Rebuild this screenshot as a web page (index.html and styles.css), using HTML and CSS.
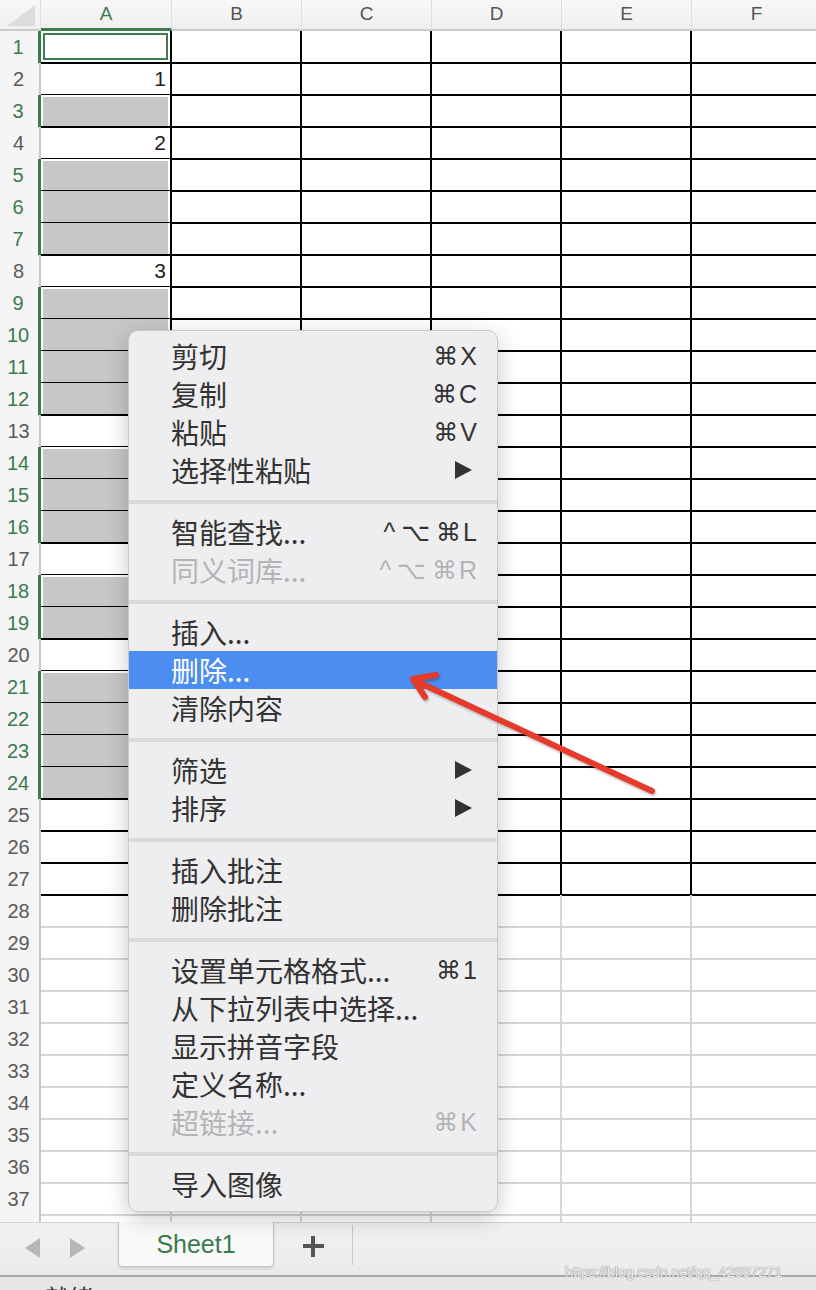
FILE: index.html
```html
<!DOCTYPE html>
<html lang="zh-CN">
<head>
    <meta charset="UTF-8">
    <meta name="viewport" content="width=device-width, initial-scale=1.0">
    <title>Sheet1</title>
    <link rel="stylesheet" href="styles.css">
</head>
<body>
<div class="window">
    <div class="sheet">
        <div class="colhead">
            <div class="corner">
                <svg width="41" height="29" viewBox="0 0 41 29"><polygon points="7,26 35,26 35,5" fill="#dcdcdc"/></svg>
            </div>
            <div class="ch cur">A</div>
            <div class="ch">B</div>
            <div class="ch">C</div>
            <div class="ch">D</div>
            <div class="ch">E</div>
            <div class="ch">F</div>
        </div>

        <div class="row bk"><div class="rh on">1</div><div class="c a active"></div><div class="c"></div><div class="c"></div><div class="c"></div><div class="c"></div><div class="c"></div></div>
        <div class="row bk"><div class="rh">2</div><div class="c a num">1</div><div class="c"></div><div class="c"></div><div class="c"></div><div class="c"></div><div class="c"></div></div>
        <div class="row bk"><div class="rh on">3</div><div class="c a g t"></div><div class="c"></div><div class="c"></div><div class="c"></div><div class="c"></div><div class="c"></div></div>
        <div class="row bk"><div class="rh">4</div><div class="c a num">2</div><div class="c"></div><div class="c"></div><div class="c"></div><div class="c"></div><div class="c"></div></div>
        <div class="row bk"><div class="rh on">5</div><div class="c a g t"></div><div class="c"></div><div class="c"></div><div class="c"></div><div class="c"></div><div class="c"></div></div>
        <div class="row bk"><div class="rh on">6</div><div class="c a g"></div><div class="c"></div><div class="c"></div><div class="c"></div><div class="c"></div><div class="c"></div></div>
        <div class="row bk"><div class="rh on">7</div><div class="c a g"></div><div class="c"></div><div class="c"></div><div class="c"></div><div class="c"></div><div class="c"></div></div>
        <div class="row bk"><div class="rh">8</div><div class="c a num">3</div><div class="c"></div><div class="c"></div><div class="c"></div><div class="c"></div><div class="c"></div></div>
        <div class="row bk"><div class="rh on">9</div><div class="c a g t"></div><div class="c"></div><div class="c"></div><div class="c"></div><div class="c"></div><div class="c"></div></div>
        <div class="row bk"><div class="rh on">10</div><div class="c a g"></div><div class="c"></div><div class="c"></div><div class="c"></div><div class="c"></div><div class="c"></div></div>
        <div class="row bk"><div class="rh on">11</div><div class="c a g"></div><div class="c"></div><div class="c"></div><div class="c"></div><div class="c"></div><div class="c"></div></div>
        <div class="row bk"><div class="rh on">12</div><div class="c a g"></div><div class="c"></div><div class="c"></div><div class="c"></div><div class="c"></div><div class="c"></div></div>
        <div class="row bk"><div class="rh">13</div><div class="c a"></div><div class="c"></div><div class="c"></div><div class="c"></div><div class="c"></div><div class="c"></div></div>
        <div class="row bk"><div class="rh on">14</div><div class="c a g t"></div><div class="c"></div><div class="c"></div><div class="c"></div><div class="c"></div><div class="c"></div></div>
        <div class="row bk"><div class="rh on">15</div><div class="c a g"></div><div class="c"></div><div class="c"></div><div class="c"></div><div class="c"></div><div class="c"></div></div>
        <div class="row bk"><div class="rh on">16</div><div class="c a g"></div><div class="c"></div><div class="c"></div><div class="c"></div><div class="c"></div><div class="c"></div></div>
        <div class="row bk"><div class="rh">17</div><div class="c a"></div><div class="c"></div><div class="c"></div><div class="c"></div><div class="c"></div><div class="c"></div></div>
        <div class="row bk"><div class="rh on">18</div><div class="c a g t"></div><div class="c"></div><div class="c"></div><div class="c"></div><div class="c"></div><div class="c"></div></div>
        <div class="row bk"><div class="rh on">19</div><div class="c a g"></div><div class="c"></div><div class="c"></div><div class="c"></div><div class="c"></div><div class="c"></div></div>
        <div class="row bk"><div class="rh">20</div><div class="c a"></div><div class="c"></div><div class="c"></div><div class="c"></div><div class="c"></div><div class="c"></div></div>
        <div class="row bk"><div class="rh on">21</div><div class="c a g t"></div><div class="c"></div><div class="c"></div><div class="c"></div><div class="c"></div><div class="c"></div></div>
        <div class="row bk"><div class="rh on">22</div><div class="c a g"></div><div class="c"></div><div class="c"></div><div class="c"></div><div class="c"></div><div class="c"></div></div>
        <div class="row bk"><div class="rh on">23</div><div class="c a g"></div><div class="c"></div><div class="c"></div><div class="c"></div><div class="c"></div><div class="c"></div></div>
        <div class="row bk"><div class="rh on">24</div><div class="c a g"></div><div class="c"></div><div class="c"></div><div class="c"></div><div class="c"></div><div class="c"></div></div>
        <div class="row bk"><div class="rh">25</div><div class="c a"></div><div class="c"></div><div class="c"></div><div class="c"></div><div class="c"></div><div class="c"></div></div>
        <div class="row bk"><div class="rh">26</div><div class="c a"></div><div class="c"></div><div class="c"></div><div class="c"></div><div class="c"></div><div class="c"></div></div>
        <div class="row bk"><div class="rh">27</div><div class="c a"></div><div class="c"></div><div class="c"></div><div class="c"></div><div class="c"></div><div class="c"></div></div>
        <div class="row"><div class="rh">28</div><div class="c a"></div><div class="c"></div><div class="c"></div><div class="c"></div><div class="c"></div><div class="c"></div></div>
        <div class="row"><div class="rh">29</div><div class="c a"></div><div class="c"></div><div class="c"></div><div class="c"></div><div class="c"></div><div class="c"></div></div>
        <div class="row"><div class="rh">30</div><div class="c a"></div><div class="c"></div><div class="c"></div><div class="c"></div><div class="c"></div><div class="c"></div></div>
        <div class="row"><div class="rh">31</div><div class="c a"></div><div class="c"></div><div class="c"></div><div class="c"></div><div class="c"></div><div class="c"></div></div>
        <div class="row"><div class="rh">32</div><div class="c a"></div><div class="c"></div><div class="c"></div><div class="c"></div><div class="c"></div><div class="c"></div></div>
        <div class="row"><div class="rh">33</div><div class="c a"></div><div class="c"></div><div class="c"></div><div class="c"></div><div class="c"></div><div class="c"></div></div>
        <div class="row"><div class="rh">34</div><div class="c a"></div><div class="c"></div><div class="c"></div><div class="c"></div><div class="c"></div><div class="c"></div></div>
        <div class="row"><div class="rh">35</div><div class="c a"></div><div class="c"></div><div class="c"></div><div class="c"></div><div class="c"></div><div class="c"></div></div>
        <div class="row"><div class="rh">36</div><div class="c a"></div><div class="c"></div><div class="c"></div><div class="c"></div><div class="c"></div><div class="c"></div></div>
        <div class="row"><div class="rh">37</div><div class="c a"></div><div class="c"></div><div class="c"></div><div class="c"></div><div class="c"></div><div class="c"></div></div>
        <div class="row"><div class="rh"></div><div class="c a"></div><div class="c"></div><div class="c"></div><div class="c"></div><div class="c"></div><div class="c"></div></div>
    </div>

    <div class="tabbar">
        <div class="nav">
            <span class="prev"></span>
            <span class="next"></span>
        </div>
        <div class="tab">Sheet1</div>
        <div class="add"></div>
        <div class="divider"></div>
    </div>
    <div class="status">就绪</div>
    <div class="watermark">https://blog.csdn.net/qq_42697271</div>

    <div class="menu">
        <div class="mi"><span>剪切</span><span class="key">⌘X</span></div>
        <div class="mi"><span>复制</span><span class="key">⌘C</span></div>
        <div class="mi"><span>粘贴</span><span class="key">⌘V</span></div>
        <div class="mi"><span>选择性粘贴</span><span class="more"></span></div>
        <div class="sep"></div>
        <div class="mi"><span>智能查找...</span><span class="key"><span class="mod">^⌥</span>⌘L</span></div>
        <div class="mi off"><span>同义词库...</span><span class="key"><span class="mod">^⌥</span>⌘R</span></div>
        <div class="sep"></div>
        <div class="mi"><span>插入...</span></div>
        <div class="mi hl"><span>删除...</span></div>
        <div class="mi"><span>清除内容</span></div>
        <div class="sep"></div>
        <div class="mi"><span>筛选</span><span class="more"></span></div>
        <div class="mi"><span>排序</span><span class="more"></span></div>
        <div class="sep"></div>
        <div class="mi"><span>插入批注</span></div>
        <div class="mi"><span>删除批注</span></div>
        <div class="sep"></div>
        <div class="mi"><span>设置单元格格式...</span><span class="key">⌘1</span></div>
        <div class="mi"><span>从下拉列表中选择...</span></div>
        <div class="mi"><span>显示拼音字段</span></div>
        <div class="mi"><span>定义名称...</span></div>
        <div class="mi off"><span>超链接...</span><span class="key">⌘K</span></div>
        <div class="sep"></div>
        <div class="mi"><span>导入图像</span></div>
    </div>

    <svg class="arrow" width="816" height="1290" viewBox="0 0 816 1290">
        <g fill="none" stroke="#e53a2c" stroke-width="6" stroke-linecap="round" stroke-linejoin="round">
            <line x1="652" y1="791" x2="416" y2="681"/>
            <polyline points="436,675 413,679 425,697"/>
        </g>
    </svg>
</div>
</body>
</html>
```

FILE: styles.css
```css
* {
    box-sizing: border-box;
}
body {
    margin: 0;
    background: #fff;
    font-family: "Liberation Sans", "Noto Sans CJK SC", sans-serif;
}
.window {
    position: relative;
    width: 816px;
    height: 1290px;
    overflow: hidden;
}
.sheet {
    height: 1222px;
    overflow: hidden;
}
.colhead,
.row {
    display: grid;
    grid-template-columns: 41px 131px repeat(5, 130px);
}
.colhead {
    height: 31px;
    background: linear-gradient(#f7f7f7, #efefef);
}
.corner {
    border-bottom: 2px solid #cbcbcb;
    border-right: 1px solid #dedede;
}
.corner svg {
    display: block;
}
.ch {
    border-bottom: 2px solid #cbcbcb;
    border-right: 1px solid #dedede;
    text-align: center;
    font-size: 19px;
    line-height: 27px;
    color: #555;
}
.ch.cur {
    color: #3a7b4e;
    border-bottom: 3px solid #3a7b4e;
}
.row {
    height: 32px;
}
.rh {
    background: #f5f5f5;
    border-right: 2px solid #c9c9c9;
    border-bottom: 1px solid #e3e3e3;
    text-align: center;
    font-size: 20px;
    line-height: 32px;
    color: #5a5a5a;
    padding-right: 2px;
}
.rh.on {
    color: #3a7b4e;
    border-right: 3px solid #3a7b4e;
}
.c {
    border-right: 2px solid #d6d6d8;
    border-bottom: 2px solid #d6d6d8;
}
.row.bk .c {
    border-color: #000;
}
.c.num {
    text-align: right;
    padding-right: 4px;
    font-size: 21px;
    line-height: 31px;
    color: #222;
}
.c.active {
    box-shadow: inset 0 0 0 2px #fff, inset 0 0 0 4px #3d7d52;
}
.c.g {
    background: #c7c7c9;
    box-shadow: inset 2px 0 #fff, inset -2px 0 #fff;
}
.c.g.t {
    box-shadow: inset 2px 2px #fff, inset -2px 0 #fff;
}

/* sheet tabs */
.tabbar {
    display: flex;
    align-items: flex-start;
    height: 55px;
    background: linear-gradient(#f1f1f1, #ebebeb);
    border-top: 1px solid #d2d2d2;
    border-bottom: 2px solid #a9a9a9;
}
.nav {
    width: 118px;
    display: flex;
    gap: 30px;
    padding: 15px 0 0 25px;
}
.prev,
.next {
    width: 0;
    height: 0;
    border-top: 10px solid transparent;
    border-bottom: 10px solid transparent;
}
.prev {
    border-right: 15px solid #b6b6b6;
}
.next {
    border-left: 15px solid #b6b6b6;
}
.tab {
    width: 156px;
    height: 45px;
    margin-top: -1px;
    background: #f9f9f9;
    border: 1px solid #c4c4c4;
    border-top: none;
    border-radius: 0 0 5px 5px;
    box-shadow: 0 2px 3px rgba(0, 0, 0, 0.12);
    text-align: center;
    font-size: 25px;
    line-height: 44px;
    color: #3a7b4e;
}
.add {
    position: relative;
    width: 21px;
    height: 21px;
    margin: 13px 0 0 29px;
}
.add::before,
.add::after {
    content: "";
    position: absolute;
    background: #555;
}
.add::before {
    left: 0;
    top: 8px;
    width: 21px;
    height: 4px;
}
.add::after {
    left: 8px;
    top: 0;
    width: 4px;
    height: 21px;
}
.divider {
    width: 1px;
    height: 40px;
    margin: 2px 0 0 28px;
    background: #c8c8c8;
}
.status {
    height: 40px;
    background: #e6e6e6;
    padding-left: 45px;
    font-family: "Noto Sans CJK SC", sans-serif;
    font-size: 24px;
    line-height: 40px;
    color: #333;
}
.watermark {
    position: absolute;
    left: 565px;
    top: 1263px;
    font-family: "Liberation Sans", sans-serif;
    font-size: 15px;
    letter-spacing: -0.4px;
    color: rgba(255, 255, 255, 0.85);
    text-shadow: 0 0 1px #8a8a8a, 0 0 1px #8a8a8a;
}

/* context menu */
.menu {
    position: absolute;
    left: 128px;
    top: 330px;
    width: 370px;
    padding: 6px 0 8px;
    background: #eeeef0;
    border: 1px solid #cacacc;
    border-radius: 10px;
    box-shadow: 0 6px 22px rgba(0, 0, 0, 0.22);
    font-family: "Noto Sans CJK SC", sans-serif;
    font-size: 28px;
    color: #333;
}
.mi {
    display: flex;
    justify-content: space-between;
    align-items: center;
    height: 38px;
    padding: 0 20px 0 42px;
    line-height: 38px;
    white-space: nowrap;
}
.mi.hl {
    background: #4c8df1;
    color: #fff;
}
.mi.off {
    color: #b4b4b6;
}
.key {
    font-family: "Liberation Sans", "DejaVu Sans", sans-serif;
    font-size: 25px;
    letter-spacing: 2px;
    margin-right: -2px;
}
.key .mod {
    letter-spacing: 6px;
}
.more {
    width: 0;
    height: 0;
    margin-right: 5px;
    border-top: 9px solid transparent;
    border-bottom: 9px solid transparent;
    border-left: 17px solid #333;
}
.sep {
    height: 4px;
    margin: 11px 0 9px;
    background: #dadadc;
}
.arrow {
    position: absolute;
    left: 0;
    top: 0;
    pointer-events: none;
    filter: drop-shadow(1px 2px 1px rgba(0, 0, 0, 0.25));
}
```
